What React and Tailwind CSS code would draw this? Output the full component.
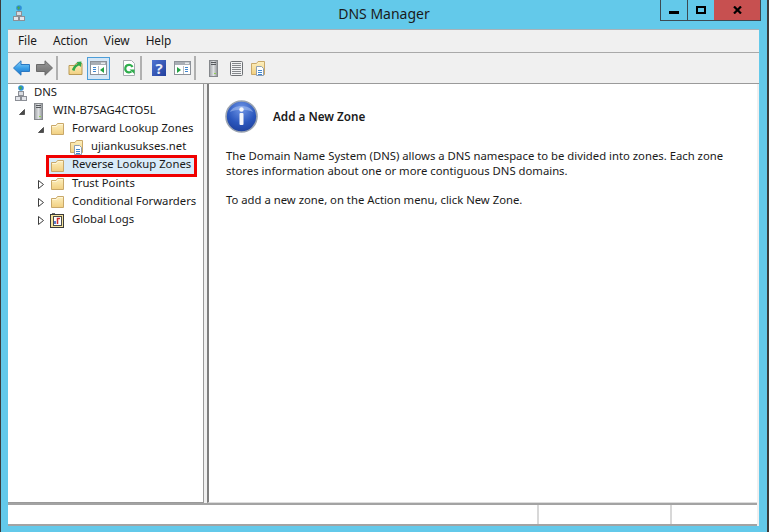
import React from "react";

const Svg = ({ w, h, children, className = "" }) => (
  <svg width={w} height={h} viewBox={`0 0 ${w} ${h}`} className={`block shrink-0 ${className}`}>
    {children}
  </svg>
);

const Defs = () => (
  <svg width="0" height="0" className="absolute">
    <defs>
      <linearGradient id="fold" x1="0" y1="0" x2="0" y2="1">
        <stop offset="0" stopColor="#fdf0c0" />
        <stop offset="1" stopColor="#f1cf80" />
      </linearGradient>
      <linearGradient id="blueArrow" x1="0" y1="0" x2="0" y2="1">
        <stop offset="0" stopColor="#8fd4f8" />
        <stop offset="0.5" stopColor="#3a9fe8" />
        <stop offset="1" stopColor="#1a6fc4" />
      </linearGradient>
      <linearGradient id="grayArrow" x1="0" y1="0" x2="0" y2="1">
        <stop offset="0" stopColor="#9a9a9a" />
        <stop offset="1" stopColor="#6d6d6d" />
      </linearGradient>
      <linearGradient id="srv" x1="0" y1="0" x2="1" y2="0">
        <stop offset="0" stopColor="#9ea1a5" />
        <stop offset="0.5" stopColor="#dfe1e3" />
        <stop offset="1" stopColor="#8f9296" />
      </linearGradient>
      <radialGradient id="info" cx="0.5" cy="0.25" r="0.85">
        <stop offset="0" stopColor="#6f95e6" />
        <stop offset="0.55" stopColor="#2b57bd" />
        <stop offset="1" stopColor="#1a3a94" />
      </radialGradient>
    </defs>
  </svg>
);

const Folder = () => (
  <Svg w={15} h={14}>
    <path d="M1.5 3.5V12.5H13.5V1.5H7.5L6 3.5Z" fill="url(#fold)" stroke="#c9a869" />
    <path d="M2 4.5H6.5L8 2.5H13" fill="none" stroke="#fff6d8" />
  </Svg>
);

const ZoneFile = () => (
  <Svg w={15} h={16}>
    <path d="M1.5 3.5V13.5H13.5V1.5H7.5L6 3.5Z" fill="url(#fold)" stroke="#c9a869" />
    <path d="M5.5 6.5H10.5L12.5 8.5V15.5H5.5Z" fill="#fff" stroke="#8d9fb5" />
    <path d="M7 10.5H11M7 12.5H11M7 14.5H11" stroke="#3f86cf" />
  </Svg>
);

const Server = ({ h = 17 }) => (
  <Svg w={9} h={h}>
    <rect x="0.5" y="0.5" width="8" height={h - 1} fill="url(#srv)" stroke="#85888c" />
    <path d="M2 2.5H7M2 4.5H7" stroke="#55585c" />
    <rect x="5" y={h - 4} width="2" height="1" fill="#8fd14f" />
  </Svg>
);

const DnsIcon = ({ className = "" }) => (
  <Svg w={12} h={17} className={className}>
    <path d="M6 6V9" stroke="#8c8f96" />
    <rect x="3.5" y="6.5" width="5" height="4" fill="#d9dbe0" stroke="#8c8f96" />
    <rect x="0.5" y="11.5" width="5" height="4" fill="#e3e5ea" stroke="#8c8f96" />
    <rect x="6.5" y="11.5" width="5" height="4" fill="#e3e5ea" stroke="#8c8f96" />
    <circle cx="6" cy="3" r="2.8" fill="#2f8fd8" />
    <path d="M4 2.2L6 1L7 3L5.5 5Z" fill="#4aa84a" />
  </Svg>
);

const Logs = () => (
  <Svg w={15} h={15}>
    <rect x="0.5" y="1.5" width="13" height="13" fill="#f5e39a" stroke="#3a3a3a" />
    <rect x="3.5" y="3.5" width="8" height="9" fill="#fff" stroke="#4a4a4a" />
    <path d="M7.5 11V5.5H10" fill="none" stroke="#cc2b2b" strokeWidth="1.5" />
    <path d="M5 11V8" stroke="#2450b8" strokeWidth="1.5" />
    <path d="M2 0.5H5" stroke="#6a6a6a" />
  </Svg>
);

const ArrowOpen = () => (
  <Svg w={13} h={18}>
    <path d="M1.5 12.5H6.5V7.5Z" fill="#4a4a4a" stroke="#555" />
  </Svg>
);

const ArrowClosed = () => (
  <Svg w={13} h={18}>
    <path d="M1.5 5.5L6.5 9.5L1.5 13.5Z" fill="#fff" stroke="#3f3f3f" />
  </Svg>
);

const Row = ({ pad, arrow, icon, text, tall, selected }) => (
  <div className={`relative flex items-center ${tall ? "h-[19px]" : "h-[18px]"} ${pad}`}>
    {selected && (
      <div className="absolute left-[37px] top-[-1px] h-[22px] w-[151px] border-[3px] border-[#f00000] bg-[#d9ebf9]" />
    )}
    {arrow !== undefined && (
      <div className="w-[13px] shrink-0">
        {arrow === "open" ? <ArrowOpen /> : arrow === "closed" ? <ArrowClosed /> : null}
      </div>
    )}
    <div className="relative flex w-[15px] shrink-0 justify-center">{icon}</div>
    <span className="relative ml-[6px] whitespace-nowrap pb-[2px] pl-px">{text}</span>
  </div>
);

const Sep = ({ ml }) => <div className={`h-[24px] w-[2px] shrink-0 bg-[#b0b0b0] ${ml}`} />;

const PaneWin = ({ right }) => (
  <Svg w={17} h={14}>
    <rect x="0.5" y="0.5" width="16" height="13" fill="#fff" stroke="#8d9299" />
    <rect x="1" y="1" width="15" height="3" fill="#a9aeb5" />
    <rect x="11" y="1.5" width="4" height="1.5" fill="#e7e9ec" />
    {right ? (
      <>
        <path d="M3 6V12L7 9Z" fill="#25a244" />
        <path d="M11 6.5H14M11 8.5H14M11 10.5H14" stroke="#3f86cf" />
        <path d="M9.5 5V13" stroke="#b8bcc2" />
      </>
    ) : (
      <>
        <path d="M3 6.5H6M3 8.5H6M3 10.5H6" stroke="#3f86cf" />
        <path d="M14 6V12L10 9Z" fill="#25a244" />
        <path d="M8.5 5V13" stroke="#b8bcc2" />
      </>
    )}
  </Svg>
);

const Toolbar = () => (
  <div className="flex h-[30px] items-center pl-[5px]">
    <Svg w={17} h={16}>
      <path d="M0.5 8L8 0.8V4.5H16.5V11.5H8V15.2Z" fill="url(#blueArrow)" stroke="#2a78c2" />
    </Svg>
    <Svg w={17} h={16} className="ml-[6px]">
      <path d="M16.5 8L9 0.8V4.5H0.5V11.5H9V15.2Z" fill="url(#grayArrow)" stroke="#6a6a6a" />
    </Svg>
    <Sep ml="ml-[3px]" />
    <Svg w={15} h={16} className="ml-[10px]">
      <path d="M1 5.5V14.5H14V3.5H8L6.5 5.5Z" fill="url(#fold)" stroke="#b99a55" />
      <path d="M4 10C5 6 8 4 10 4L8.5 2L13.5 1.5L13 7L11 5.5C9 6 7 8 6.5 11Z" fill="#2fa84a" />
    </Svg>
    <div className="ml-[4px] flex h-[23px] w-[23px] shrink-0 items-center justify-center border border-[#4c9ed9] bg-[#d5e6f5]">
      <PaneWin />
    </div>
    <Svg w={14} h={16} className="ml-[12px]">
      <path d="M1.5 0.5H9.5L12.5 3.5V15.5H1.5Z" fill="#fff" stroke="#a6aab0" />
      <path d="M10.5 7A3.8 3.8 0 1 0 9.5 11.5" fill="none" stroke="#2fae4d" strokeWidth="2.2" />
      <path d="M7.5 9.5H12.5V14Z" fill="#2fae4d" />
    </Svg>
    <Sep ml="ml-[4px]" />
    <div className="ml-[10px] flex h-[16px] w-[14px] shrink-0 items-center justify-center bg-gradient-to-br from-[#4f74d2] to-[#233f9c] text-[15px] leading-none font-bold text-[#e8ecfa]">
      ?
    </div>
    <div className="ml-[8px] shrink-0">
      <PaneWin right />
    </div>
    <Sep ml="ml-[3px]" />
    <div className="ml-[13px] shrink-0">
      <Server />
    </div>
    <Svg w={15} h={15} className="ml-[11px]">
      <rect x="1.5" y="0.5" width="12" height="14" rx="1" fill="#f2f3f4" stroke="#6e7175" />
      <path d="M3 2.5H12M3 4.5H12M3 6.5H12M3 8.5H12M3 10.5H12M3 12.5H12" stroke="#85888c" />
    </Svg>
    <Svg w={15} h={16} className="ml-[7px]">
      <path d="M0.5 3.5V14.5H13.5V1.5H7L5.5 3.5Z" fill="url(#fold)" stroke="#c9a869" />
      <path d="M5.5 6.5H10.5L12.5 8.5V15.5H5.5Z" fill="#fff" stroke="#8d9fb5" />
      <path d="M7 10.5H11M7 12.5H11M7 14.5H11" stroke="#3f86cf" />
    </Svg>
  </div>
);

export default function App() {
  return (
    <div className="flex h-[532px] w-[769px] overflow-hidden bg-[#63c9ea] font-['Noto_Sans',sans-serif] text-[11.3px] text-black">
      <Defs />
      <div className="w-px shrink-0 bg-[#3c3c3c]" />
      <div className="flex min-w-0 flex-1 flex-col">
        <div className="grid h-[29px] shrink-0 grid-cols-[1fr_auto_1fr]">
          <div className="pl-[12px] pt-[5px]">
            <DnsIcon />
          </div>
          <div className="pt-[4px] text-[14px] leading-[20px] text-[#1a1a1a]">DNS Manager</div>
          <div className="flex justify-end pr-[6px]">
            <div className="flex h-[21px] border border-t-0 border-[#3c4a52]">
              <div className="flex w-[27px] items-center justify-center border-r border-[#3c4a52]">
                <div className="mt-[4px] h-[3px] w-[10px] bg-black" />
              </div>
              <div className="flex w-[26px] items-center justify-center">
                <div className="h-[8px] w-[10px] border-2 border-black" />
              </div>
              <div className="flex w-[46px] items-center justify-center bg-[#c75050]">
                <Svg w={9} h={8}>
                  <path d="M1 0.5L8 7.5M8 0.5L1 7.5" stroke="#000" strokeWidth="2.2" />
                </Svg>
              </div>
            </div>
          </div>
        </div>

        <div className="ml-[7px] mr-[8px] flex h-[497px] flex-col border-t border-[#a9b2b8] bg-[#f0f0f0]">
          <div className="flex h-[23px] shrink-0 items-center gap-4 border-b border-[#a9a9a9] pl-[10px] text-[11.8px] text-[#1a1a1a]">
            <span>File</span>
            <span>Action</span>
            <span>View</span>
            <span>Help</span>
          </div>
          <Toolbar />
          <div className="flex min-h-0 flex-1 border-t border-[#9a9a9a]">
            <div className="w-[196px] shrink-0 border-r border-b border-[#9a9a9a] bg-white pl-px text-[#1a1a1a]">
              <Row pad="pl-[3px]" icon={<DnsIcon className="ml-[3px]" />} text="DNS" />
              <Row pad="pl-[9px]" arrow="open" icon={<Server />} text="WIN-B7SAG4CTO5L" />
              <Row pad="pl-[28px]" arrow="open" icon={<Folder />} text="Forward Lookup Zones" />
              <Row pad="pl-[47px]" arrow="none" icon={<ZoneFile />} text="ujiankusukses.net" />
              <Row pad="pl-[28px]" arrow="none" icon={<Folder />} text="Reverse Lookup Zones" tall selected />
              <Row pad="pl-[28px]" arrow="closed" icon={<Folder />} text="Trust Points" />
              <Row pad="pl-[28px]" arrow="closed" icon={<Folder />} text="Conditional Forwarders" />
              <Row pad="pl-[28px]" arrow="closed" icon={<Logs />} text="Global Logs" />
            </div>
            <div className="ml-[3px] mr-[2px] flex-1 border-b border-l-2 border-[#dcdcdc] border-l-[#7f7f7f] bg-white pl-[17px] text-[#1a1a1a]">
              <div className="flex items-center pt-[16px]">
                <Svg w={33} h={33} className="-ml-[1px]">
                  <circle cx="16.5" cy="16.5" r="15.5" fill="url(#info)" stroke="#9aa3b0" strokeWidth="1.6" />
                  <path d="M5 12C8 4 25 4 28 12C22 9 11 9 5 12Z" fill="#a9c2f2" opacity="0.55" />
                  <rect x="14.5" y="13" width="4" height="12" rx="1" fill="#f4f6fb" />
                  <circle cx="16.5" cy="9.5" r="2.2" fill="#f4f6fb" />
                </Svg>
                <span className="ml-[15px] text-[11.7px] font-semibold">Add a New Zone</span>
              </div>
              <p className="mt-[15px] w-[510px] leading-[15px]">
                The Domain Name System (DNS) allows a DNS namespace to be divided into zones. Each zone stores information about one or more contiguous DNS domains.
              </p>
              <p className="mt-[14px] leading-[15px]">To add a new zone, on the Action menu, click New Zone.</p>
            </div>
          </div>
          <div className="mr-[2px] flex h-[23px] shrink-0 border-t-2 border-b-2 border-[#a3a3a3] bg-white">
            <div className="w-[531px] border-r-2 border-[#d8d8d8]" />
            <div className="w-[133px] border-r-2 border-[#d8d8d8]" />
          </div>
        </div>
      </div>
      <div className="w-[2px] shrink-0 bg-[#3c3c3c]" />
    </div>
  );
}
